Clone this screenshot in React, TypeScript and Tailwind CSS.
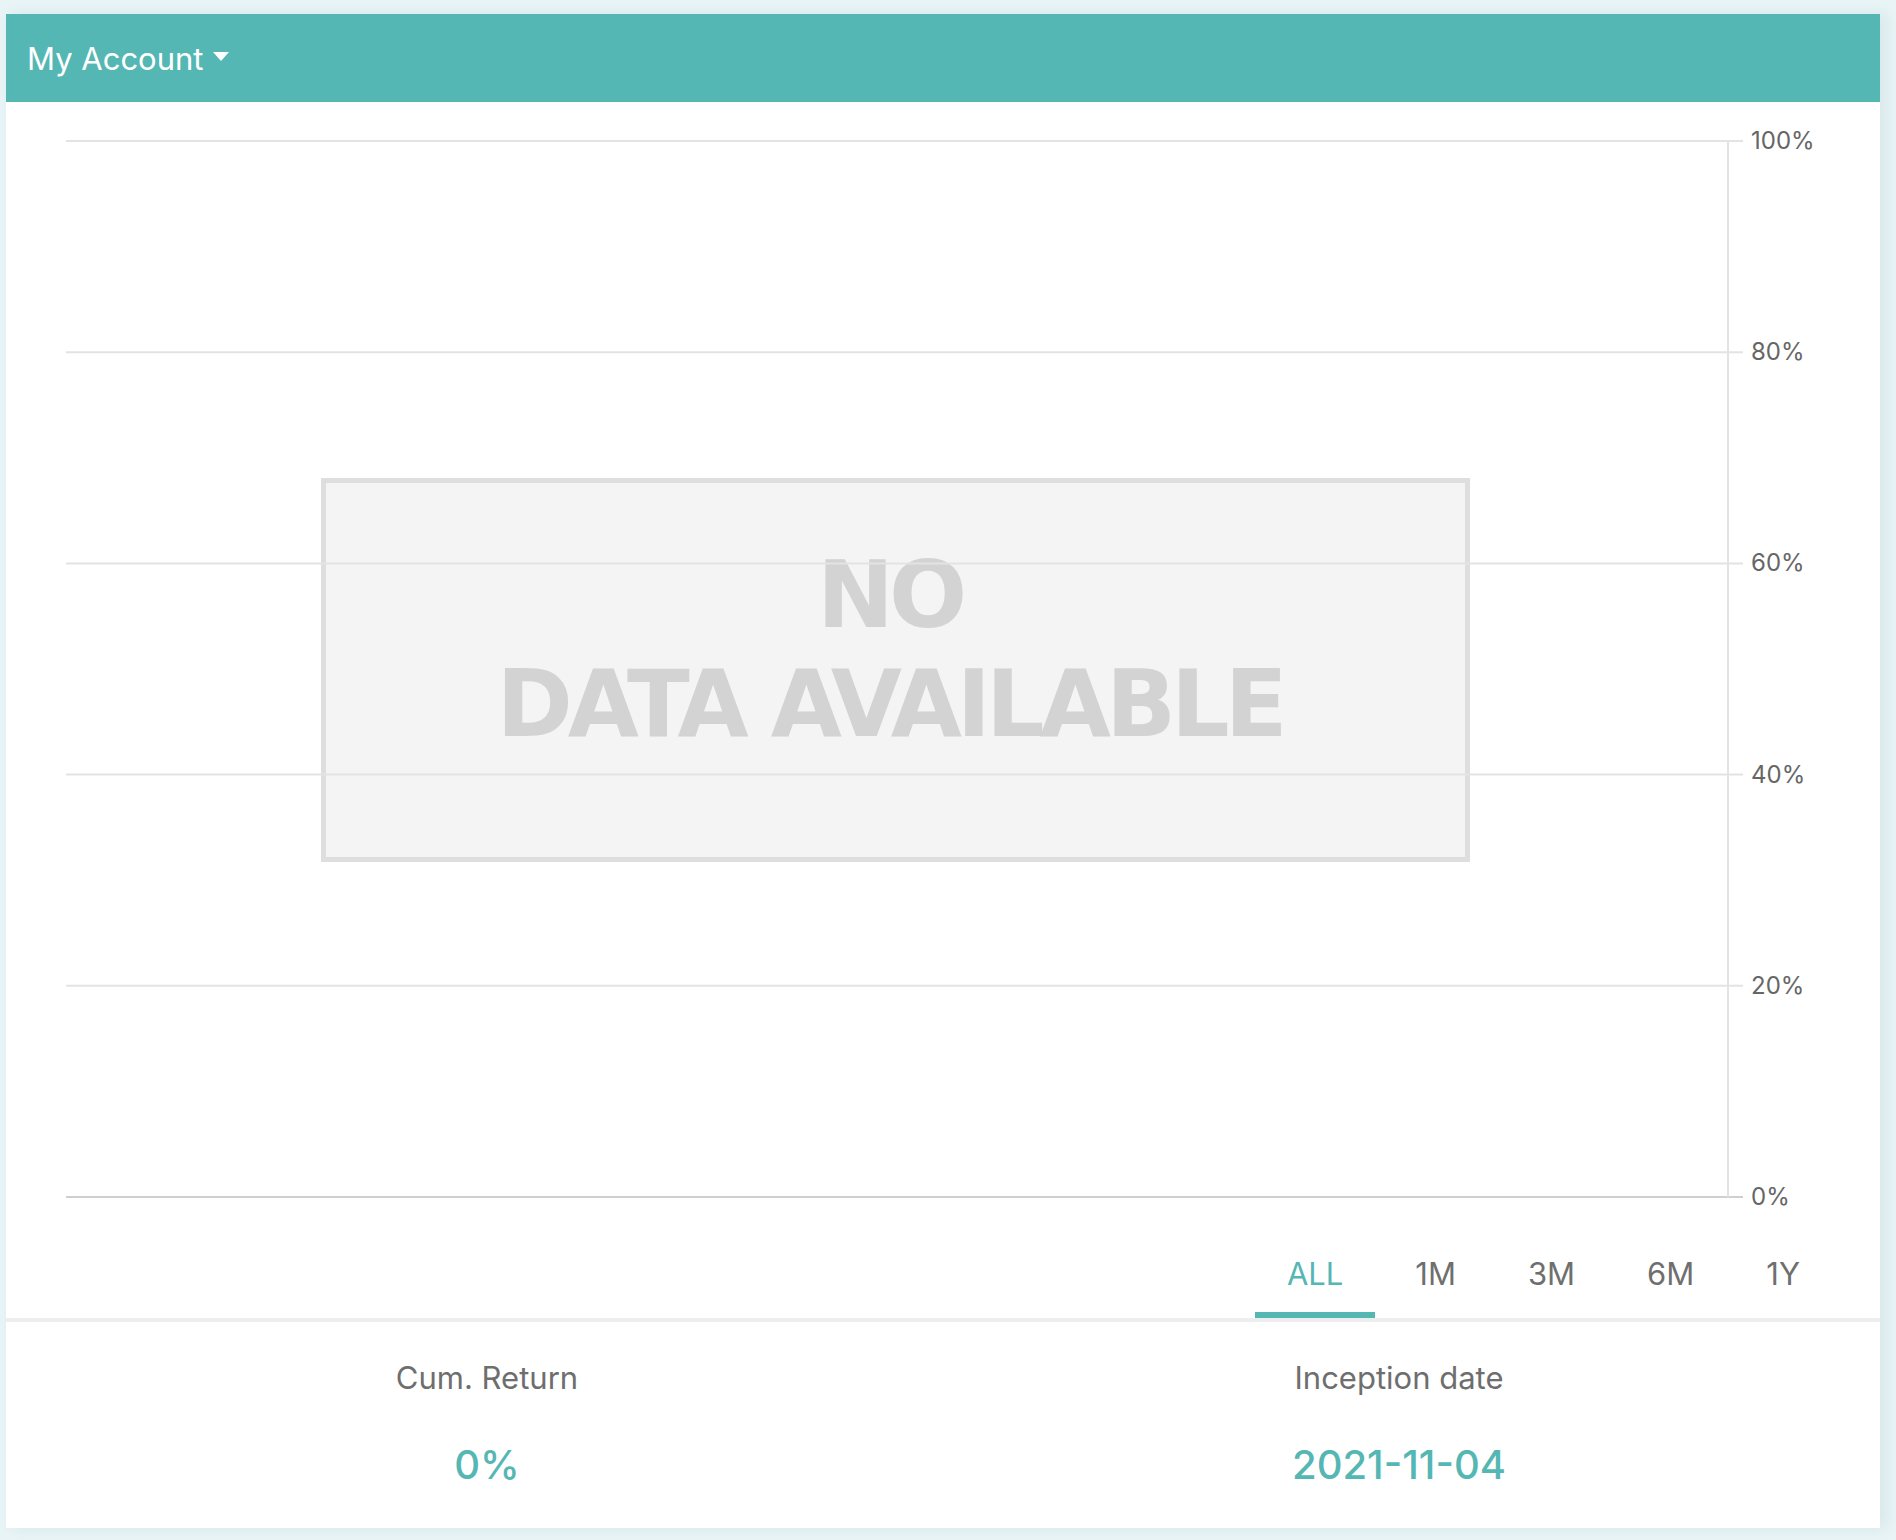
import { useState } from 'react';

const ticks = ['100%', '80%', '60%', '40%', '20%', '0%'];
const ranges = ['ALL', '1M', '3M', '6M', '1Y'];

// chart geometry (px, relative to the chart area)
const TOP = 39;
const STEP = 211.2;
const LEFT = 60;
const AXIS_X = 1722;
const RIGHT = 1737;

function EmptyChart() {
    return (
        <div className="relative h-[1128px]">
            {/* No data placeholder */}
            <div className="absolute left-[315px] top-[376px] w-[1149px] h-[384px] border-[5px] border-[#dedede] bg-[#f4f4f4] flex flex-col items-center pt-[58px] pr-[12px]">
                <span
                    className="block text-[92px] leading-[109px] font-bold text-[#d3d3d3] tracking-[-5px]"
                    style={{ fontFamily: '"DejaVu Sans", Verdana, sans-serif' }}
                >
                    NO
                </span>
                <span
                    className="block text-[92px] leading-[109px] font-bold text-[#d3d3d3] tracking-[-5px]"
                    style={{ fontFamily: '"DejaVu Sans", Verdana, sans-serif' }}
                >
                    DATA AVAILABLE
                </span>
            </div>

            {/* Grid + axis */}
            <svg className="absolute inset-0" width="1874" height="1128">
                {ticks.map((t, i) => (
                    <line
                        key={t}
                        x1={LEFT}
                        x2={RIGHT}
                        y1={TOP + i * STEP}
                        y2={TOP + i * STEP}
                        stroke={i === ticks.length - 1 ? '#cfcfcf' : '#e3e3e3'}
                        strokeWidth="2"
                    />
                ))}
                <line x1={AXIS_X} x2={AXIS_X} y1={TOP} y2={TOP + 5 * STEP} stroke="#e3e3e3" strokeWidth="2" />
            </svg>

            {ticks.map((t, i) => (
                <div
                    key={t}
                    className="absolute left-[1745px] text-[24px] leading-[24px] text-[#666666]"
                    style={{ top: TOP + i * STEP - 12 }}
                >
                    {t}
                </div>
            ))}
        </div>
    );
}

export default function App() {
    const [range, setRange] = useState('ALL');

    return (
        <div className="min-h-screen bg-[#e8f4f6] pt-[14px] pl-[6px] pb-[12px]" style={{ fontFamily: 'Inter, "Liberation Sans", sans-serif' }}>
            <div className="w-[1874px] bg-white shadow-[6px_0_14px_rgba(40,90,100,0.08)]">
                {/* Header */}
                <div className="h-[88px] bg-[#55b7b3] flex items-center pl-[21px]">
                    <button className="flex items-center gap-[10px] text-white text-[31px] leading-none">
                        <span>My Account</span>
                        <span className="block w-0 h-0 border-x-[8px] border-x-transparent border-t-[9px] border-t-white -translate-y-[2px]" />
                    </button>
                </div>

                <EmptyChart />

                {/* Range tabs */}
                <div className="flex justify-end gap-[8px] pr-[48px]">
                    {ranges.map((r) => (
                        <button
                            key={r}
                            onClick={() => setRange(r)}
                            className={`px-[32px] pt-[28px] pb-[22px] border-b-[6px] text-[31px] leading-[32px] ${
                                range === r ? 'border-[#55b7b3] text-[#55b7b3]' : 'border-transparent text-[#6f6f6f]'
                            }`}
                        >
                            {r}
                        </button>
                    ))}
                </div>
                <div className="h-[4px] bg-[#eeeeee]" />

                {/* Stats */}
                <div className="grid grid-cols-2 px-[25px] pt-[40px] pb-[43px] text-center">
                    <div>
                        <div className="text-[31px] leading-[32px] text-[#6e6e6e]">Cum. Return</div>
                        <div className="mt-[51px] text-[40px] leading-[40px] font-medium text-[#55b7b3]">0%</div>
                    </div>
                    <div>
                        <div className="text-[31px] leading-[32px] text-[#6e6e6e]">Inception date</div>
                        <div className="mt-[51px] text-[40px] leading-[40px] font-medium text-[#55b7b3]">2021-11-04</div>
                    </div>
                </div>
            </div>
        </div>
    );
}
